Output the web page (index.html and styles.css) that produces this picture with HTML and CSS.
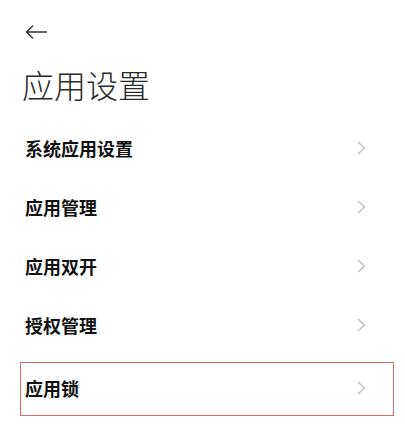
FILE: index.html
```html
<!DOCTYPE html>
<html lang="zh-CN">
<head>
<meta charset="utf-8">
<link rel="stylesheet" href="styles.css">
</head>
<body>
<div class="page">
  <div class="topbar">
    <svg class="back" width="22" height="14" viewBox="0 0 22 14"><path d="M21.5 7H1.5M7.5 1L1.5 7L7.5 13" fill="none" stroke="#333" stroke-width="1.5" stroke-linecap="round" stroke-linejoin="round"/></svg>
  </div>
  <h1 class="title">应用设置</h1>
  <div class="list">
    <div class="row"><span class="label">系统应用设置</span><svg class="chev" width="9" height="14" viewBox="0 0 9 14"><path d="M1 1L7.5 7L1 13" fill="none" stroke="#bdbdbd" stroke-width="1.3"/></svg></div>
    <div class="row"><span class="label">应用管理</span><svg class="chev" width="9" height="14" viewBox="0 0 9 14"><path d="M1 1L7.5 7L1 13" fill="none" stroke="#bdbdbd" stroke-width="1.3"/></svg></div>
    <div class="row"><span class="label">应用双开</span><svg class="chev" width="9" height="14" viewBox="0 0 9 14"><path d="M1 1L7.5 7L1 13" fill="none" stroke="#bdbdbd" stroke-width="1.3"/></svg></div>
    <div class="row"><span class="label">授权管理</span><svg class="chev" width="9" height="14" viewBox="0 0 9 14"><path d="M1 1L7.5 7L1 13" fill="none" stroke="#bdbdbd" stroke-width="1.3"/></svg></div>
    <div class="row highlight"><span class="label">应用锁</span><svg class="chev" width="9" height="14" viewBox="0 0 9 14"><path d="M1 1L7.5 7L1 13" fill="none" stroke="#bdbdbd" stroke-width="1.3"/></svg></div>
  </div>
</div>
</body>
</html>
```
FILE: styles.css
```css
html, body {
  margin: 0;
  padding: 0;
  background: #ffffff;
}
body {
  font-family: "Noto Sans CJK SC", "Noto Sans", sans-serif;
  color: #1a1a1a;
}
.page {
  width: 405px;
  height: 446px;
  overflow: hidden;
}
.topbar {
  height: 68px;
  padding-left: 25px;
  padding-top: 25px;
  box-sizing: border-box;
}
.back {
  display: block;
}
.title {
  margin: 0;
  padding-left: 22px;
  font-size: 32px;
  line-height: 32px;
  height: 32px;
  font-weight: 300;
  color: #2a2a2a;
}
.list {
  margin-top: 18px;
}
.row {
  height: 59px;
  display: flex;
  align-items: center;
  justify-content: space-between;
  padding: 0 39px 0 25px;
}
.label {
  font-size: 18px;
  font-weight: 700;
  line-height: 20px;
  color: #111;
}
.chev {
  display: block;
}
.row.highlight {
  margin: 8px 11px 0 20px;
  height: 54px;
  box-sizing: border-box;
  border: 1px solid #e06a66;
  padding: 0 27px 3px 4px;
}
```
